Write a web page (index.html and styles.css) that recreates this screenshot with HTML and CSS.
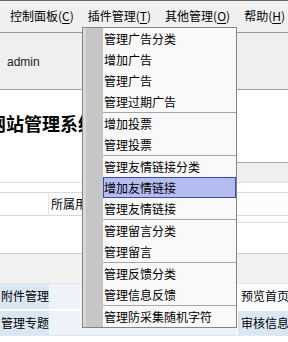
FILE: index.html
```html
<!DOCTYPE html>
<html lang="zh-CN">
<head>
<meta charset="utf-8">
<title>网站管理系统</title>
<link rel="stylesheet" href="styles.css">
</head>
<body>
<div class="page">
  <div class="topline"></div>
  <nav class="menubar">
    <span class="mi">控制面板(<u>C</u>)</span>
    <span class="mi">插件管理(<u>T</u>)</span>
    <span class="mi">其他管理(<u>O</u>)</span>
    <span class="mi">帮助(<u>H</u>)</span>
  </nav>
  <div class="userbar"><span class="user">admin</span></div>
  <div class="banner"><h1 class="title">网站管理系统</h1></div>
  <div class="grid">
    <div class="c r0"></div><div class="c r0"></div><div class="c r0 gray"></div>
    <div class="c r1"></div><div class="c r1"></div><div class="c r1"></div>
    <div class="c r2 first"></div><div class="c r2 label">所属用户</div><div class="c r2"></div>
    <div class="c r3"></div><div class="c r3"></div><div class="c r3 rline"></div>
    <div class="c r4"></div><div class="c r4"></div><div class="c r4"></div>
    <div class="c r5 blue">附件管理</div><div class="c r5 pale"></div><div class="c r5 txt">预览首页</div>
    <div class="c r6 blue">管理专题</div><div class="c r6 pale"></div><div class="c r6 blue txt">审核信息</div>
  </div>
  <div class="bottom"></div>

  <div class="menu">
    <div class="item">管理广告分类</div>
    <div class="item">增加广告</div>
    <div class="item">管理广告</div>
    <div class="item">管理过期广告</div>
    <div class="sep"></div>
    <div class="item">增加投票</div>
    <div class="item">管理投票</div>
    <div class="sep"></div>
    <div class="item">管理友情链接分类</div>
    <div class="item active">增加友情链接</div>
    <div class="item">管理友情链接</div>
    <div class="sep"></div>
    <div class="item">管理留言分类</div>
    <div class="item">管理留言</div>
    <div class="sep"></div>
    <div class="item">管理反馈分类</div>
    <div class="item">管理信息反馈</div>
    <div class="sep"></div>
    <div class="item">管理防采集随机字符</div>
  </div>
</div>
</body>
</html>
```

FILE: styles.css
```css
html, body {
  margin: 0;
  padding: 0;
  background: #ffffff;
}
.page {
  position: relative;
  width: 288px;
  height: 342px;
  overflow: hidden;
  font-family: "Noto Sans CJK SC", "Liberation Sans", sans-serif;
  font-size: 12px;
  color: #000;
}
.topline {
  height: 1px;
  background: #6a6a6a;
}
.menubar {
  display: flex;
  height: 31px;
  line-height: 30px;
  padding-left: 3px;
  background: #f0f0f0;
  border-bottom: 1px solid #9c9c9c;
}
.mi {
  padding: 0 7px;
  white-space: nowrap;
}
.mi u {
  text-decoration: underline;
  text-underline-offset: 2px;
}
.userbar {
  height: 57px;
  display: flex;
  align-items: center;
  padding-left: 7px;
  padding-top: 2px;
  box-sizing: border-box;
  background: #efefef;
  border-bottom: 1px solid #a0a0a0;
}
.user {
  font-family: "Liberation Sans", "DejaVu Sans", sans-serif;
  font-size: 12px;
  color: #222;
}
.banner {
  height: 72px;
  box-sizing: border-box;
  padding-bottom: 6px;
  display: flex;
  align-items: center;
}
.title {
  margin: 0 0 0 -12px;
  font-family: "Noto Sans CJK SC", sans-serif;
  font-size: 18px;
  font-weight: bold;
  white-space: nowrap;
}
.grid {
  display: grid;
  grid-template-columns: 49px 188px 51px;
  grid-template-rows: 20px 10px 24px 37px 31px 25px 26px;
}
.c {
  box-sizing: border-box;
  white-space: nowrap;
  overflow: hidden;
}
.r0.gray {
  background: #efefef;
  border-top: 1px solid #a8a8a8;
}
.r1 {
  border-top: 1px solid #e2e2e2;
}
.r2 {
  border-top: 1px solid #d8d8d8;
  border-bottom: 1px solid #d8d8d8;
  background: #fcfcfc;
}
.r2.first {
  background: #ffffff;
  border-right: 1px solid #e6e6e6;
}
.label {
  padding-left: 2px;
  line-height: 22px;
}
.r3.rline {
  border-top: 1px solid #e2e2e2;
  margin-top: 6px;
}
.r4 {
  background: #f1f1f1;
  border-top: 1px solid #d0d0d0;
  border-bottom: 1px solid #e4e4e4;
}
.r5, .r6 {
  line-height: 24px;
}
.r6 {
  border-top: 2px solid #ffffff;
}
.blue {
  background: #dae6f3;
  padding-left: 1px;
}
.pale {
  background: #eef3f9;
}
.txt {
  padding-left: 4px;
}
.r5.txt {
  background: #fbfdff;
}
.r6.txt {
  padding-left: 3px;
  margin-left: 1px;
}
.bottom {
  height: 9px;
  border-top: 1px solid #dfe8f1;
  background: #ffffff;
}
.menu {
  position: absolute;
  left: 82px;
  top: 27px;
  width: 155px;
  height: 301px;
  box-sizing: border-box;
  border: 1px solid #858585;
  background: linear-gradient(to right, #d8d8d8 0 3px, #c6c6c6 3px 20px, #f9f9f9 20px);
  display: flex;
  flex-direction: column;
}
.item {
  height: 21px;
  line-height: 21px;
  padding-left: 21px;
  white-space: nowrap;
  box-sizing: border-box;
}
.item.active {
  margin-left: 20px;
  padding-left: 0;
  background: #b5bdf0;
  border: 1px solid #3d4aa8;
  line-height: 19px;
}
.sep {
  height: 1px;
  margin-left: 20px;
  background: #a6a6a6;
}
```
